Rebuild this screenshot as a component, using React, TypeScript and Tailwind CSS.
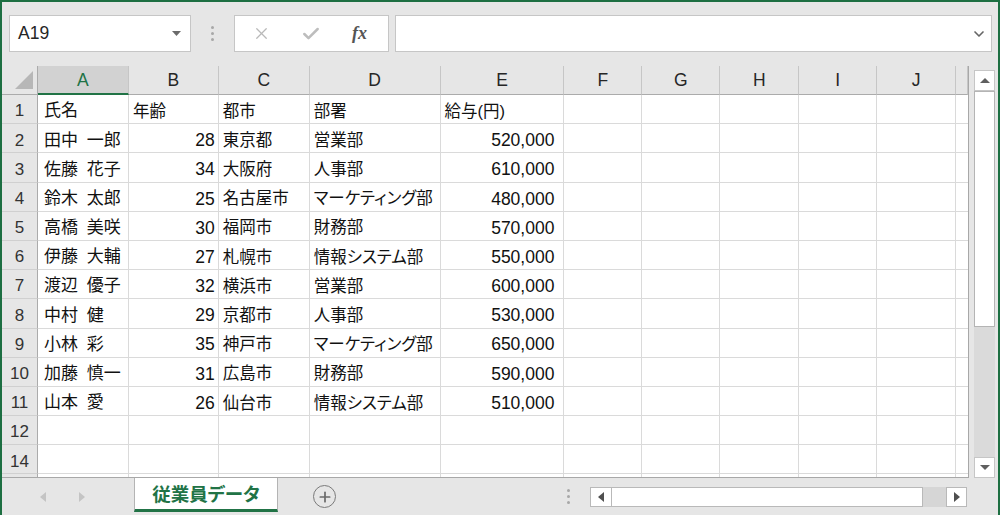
import { X, Check, ChevronDown, Plus } from 'lucide-react';

const font = "font-['Liberation_Sans','Noto_Sans_CJK_JP',sans-serif] [font-feature-settings:'palt']";

const columns = [
  { key: 'A', w: 'w-[91px]' },
  { key: 'B', w: 'w-[90px]' },
  { key: 'C', w: 'w-[91px]' },
  { key: 'D', w: 'w-[131px]' },
  { key: 'E', w: 'w-[124px]' },
  { key: 'F', w: 'w-[78px]' },
  { key: 'G', w: 'w-[78px]' },
  { key: 'H', w: 'w-[79px]' },
  { key: 'I', w: 'w-[78px]' },
  { key: 'J', w: 'w-[79px]' },
  { key: '', w: 'w-[12px]' },
];

type Row = { n: string; name?: string; age?: string; city?: string; dept?: string; pay?: string };

const rows: Row[] = [
  { n: '1', name: '氏名', age: '年齢', city: '都市', dept: '部署', pay: '給与(円)' },
  { n: '2', name: '田中 一郎', age: '28', city: '東京都', dept: '営業部', pay: '520,000' },
  { n: '3', name: '佐藤 花子', age: '34', city: '大阪府', dept: '人事部', pay: '610,000' },
  { n: '4', name: '鈴木 太郎', age: '25', city: '名古屋市', dept: 'マーケティング部', pay: '480,000' },
  { n: '5', name: '高橋 美咲', age: '30', city: '福岡市', dept: '財務部', pay: '570,000' },
  { n: '6', name: '伊藤 大輔', age: '27', city: '札幌市', dept: '情報システム部', pay: '550,000' },
  { n: '7', name: '渡辺 優子', age: '32', city: '横浜市', dept: '営業部', pay: '600,000' },
  { n: '8', name: '中村 健', age: '29', city: '京都市', dept: '人事部', pay: '530,000' },
  { n: '9', name: '小林 彩', age: '35', city: '神戸市', dept: 'マーケティング部', pay: '650,000' },
  { n: '10', name: '加藤 慎一', age: '31', city: '広島市', dept: '財務部', pay: '590,000' },
  { n: '11', name: '山本 愛', age: '26', city: '仙台市', dept: '情報システム部', pay: '510,000' },
  { n: '12' },
  { n: '14' },
  { n: '' },
];

function Dots() {
  return (
    <div className="flex flex-col gap-[3px]">
      <span className="size-[3px] rounded-full bg-[#a8a8a8]" />
      <span className="size-[3px] rounded-full bg-[#a8a8a8]" />
      <span className="size-[3px] rounded-full bg-[#a8a8a8]" />
    </div>
  );
}

function Toolbar() {
  return (
    <div className="flex h-[37px] pl-[7px] pr-[6px] mt-[13px]">
      <div className="flex w-[182px] items-center justify-between border border-[#c6c6c6] bg-white pl-[8px] pr-[9px]">
        <span className="text-[17.5px] text-[#262626]">A19</span>
        <svg width="9" height="5" viewBox="0 0 9 5">
          <path d="M0 0h9L4.5 5z" fill="#6b6b6b" />
        </svg>
      </div>
      <div className="flex w-[43px] items-center justify-center">
        <Dots />
      </div>
      <div className="flex w-[155px] items-center border border-[#c6c6c6] bg-white">
        <X className="ml-[17px] size-[19px] text-[#b9b9b9]" strokeWidth={1.6} />
        <Check className="ml-[30px] size-[20px] text-[#bdbdbd]" strokeWidth={3} />
        <span className="ml-[31px] font-['Liberation_Serif',serif] text-[18px] font-bold italic text-[#555]">fx</span>
      </div>
      <div className="ml-[6px] flex flex-1 items-center justify-end border border-[#c6c6c6] bg-white pr-[4px]">
        <ChevronDown className="size-[16px] text-[#666]" strokeWidth={2.5} />
      </div>
    </div>
  );
}

function HeaderRow() {
  return (
    <div className="flex h-[29px] shrink-0">
      <div className="flex w-[36px] items-end justify-end border-r border-b border-[#ababab] bg-[#e6e6e6] pb-[5px] pr-[4px]">
        <svg width="18" height="18" viewBox="0 0 18 18">
          <path d="M18 0V18H0z" fill="#b7b7b7" />
        </svg>
      </div>
      {columns.map((c) =>
        c.key === 'A' ? (
          <div
            key="A"
            className={`${c.w} flex items-center justify-center border-r border-r-[#c6c6c6] border-b-2 border-b-[#217346] bg-[#d2d2d2] pt-[1px] text-[17.5px] text-[#217346]`}
          >
            A
          </div>
        ) : (
          <div
            key={c.key || 'k'}
            className={`${c.w} flex items-center justify-center border-r border-r-[#c6c6c6] border-b border-b-[#ababab] bg-[#e6e6e6] pt-[1px] text-[17.5px] text-[#262626]`}
          >
            {c.key}
          </div>
        ),
      )}
    </div>
  );
}

function DataRow({ row }: { row: Row }) {
  const head = row.n === '1';
  return (
    <div className="flex h-[29.2px] shrink-0">
      <div className="flex w-[36px] items-center justify-center border-r border-r-[#ababab] border-b border-b-[#d0d0d0] bg-[#e6e6e6] pt-[4px] text-[17px] text-[#333]">
        {row.n}
      </div>
      <div className="flex w-[91px] items-center whitespace-nowrap border-r border-b border-[#dadada] pl-[6px] pt-[4px] text-[17px] [word-spacing:4px]">
        {row.name}
      </div>
      <div
        className={`flex w-[90px] items-center whitespace-nowrap border-r border-b border-[#dadada] pt-[4px] ${
          head ? 'pl-[4px]' : 'justify-end pr-[3px] text-[17.5px]'
        }`}
      >
        {row.age}
      </div>
      <div className="flex w-[91px] items-center whitespace-nowrap border-r border-b border-[#dadada] pl-[4px] pt-[4px]">{row.city}</div>
      <div className="flex w-[131px] items-center overflow-hidden whitespace-nowrap border-r border-b border-[#dadada] pl-[4px] pt-[4px]">
        {row.dept}
      </div>
      <div
        className={`flex w-[124px] items-center whitespace-nowrap border-r border-b border-[#dadada] pt-[4px] ${
          head ? 'pl-[4px]' : 'justify-end pr-[9px] text-[17.5px]'
        }`}
      >
        {row.pay}
      </div>
      <div className="w-[78px] border-r border-b border-[#dadada]" />
      <div className="w-[78px] border-r border-b border-[#dadada]" />
      <div className="w-[79px] border-r border-b border-[#dadada]" />
      <div className="w-[78px] border-r border-b border-[#dadada]" />
      <div className="w-[79px] border-r border-b border-[#dadada]" />
      <div className="w-[12px] border-b border-[#dadada]" />
    </div>
  );
}

function VScroll() {
  return (
    <div className="ml-[5px] flex w-[21px] flex-col pt-[4px]">
      <div className="flex h-[21px] items-center justify-center border border-[#c6c6c6] bg-white">
        <svg width="10" height="5" viewBox="0 0 10 5">
          <path d="M0 5h10L5 0z" fill="#5f5f5f" />
        </svg>
      </div>
      <div className="h-[236px] border border-[#b4b4b4] bg-white" />
      <div className="flex-1 bg-[#dadada]" />
      <div className="flex h-[21px] items-center justify-center border border-[#c6c6c6] bg-white">
        <svg width="10" height="5" viewBox="0 0 10 5">
          <path d="M0 0h10L5 5z" fill="#5f5f5f" />
        </svg>
      </div>
    </div>
  );
}

function TabBar() {
  return (
    <div className="flex h-[37px] items-center">
      <div className="flex w-[132px] items-center gap-[33px] pl-[38px]">
        <svg width="6" height="10" viewBox="0 0 6 10">
          <path d="M6 0v10L0 5z" fill="#c4c4c4" />
        </svg>
        <svg width="6" height="10" viewBox="0 0 6 10">
          <path d="M0 0v10l6-5z" fill="#c4c4c4" />
        </svg>
      </div>
      <div className="flex h-[34px] w-[144px] items-center justify-center self-start border-x border-x-[#b4b4b4] border-b-[3px] border-b-[#217346] bg-white pt-[2px] text-[18.5px] font-bold text-[#217346]">
        従業員データ
      </div>
      <div className="ml-[35px] flex size-[23px] items-center justify-center rounded-full border-[1.5px] border-[#7a7a7a]">
        <Plus className="size-[16px] text-[#6a6a6a]" strokeWidth={2.6} />
      </div>
      <div className="ml-[231px]">
        <Dots />
      </div>
      <div className="ml-[20px] flex h-[20px] w-[377px]">
        <div className="flex w-[22px] items-center justify-center border border-[#b9b9b9] bg-white">
          <svg width="6" height="10" viewBox="0 0 6 10">
            <path d="M6 0v10L0 5z" fill="#4f4f4f" />
          </svg>
        </div>
        <div className="w-[311px] border border-l-0 border-[#b9b9b9] bg-white" />
        <div className="flex-1 bg-[#d6d6d6]" />
        <div className="flex w-[21px] items-center justify-center border border-[#b9b9b9] bg-white">
          <svg width="6" height="10" viewBox="0 0 6 10">
            <path d="M0 0v10l6-5z" fill="#4f4f4f" />
          </svg>
        </div>
      </div>
    </div>
  );
}

export default function App() {
  return (
    <div className={`h-[515px] w-[1000px] overflow-hidden border-x-2 border-t-2 border-[#1d6f42] bg-[#e6e6e6] ${font}`}>
      <Toolbar />
      <div className="mt-[14px] flex h-[412px]">
        <div className="flex w-[967px] flex-col overflow-hidden border-r border-b border-[#a8a8a8] bg-white text-[16.5px] text-[#111]">
          <HeaderRow />
          {rows.map((r, i) => (
            <DataRow key={i} row={r} />
          ))}
        </div>
        <VScroll />
      </div>
      <TabBar />
    </div>
  );
}
